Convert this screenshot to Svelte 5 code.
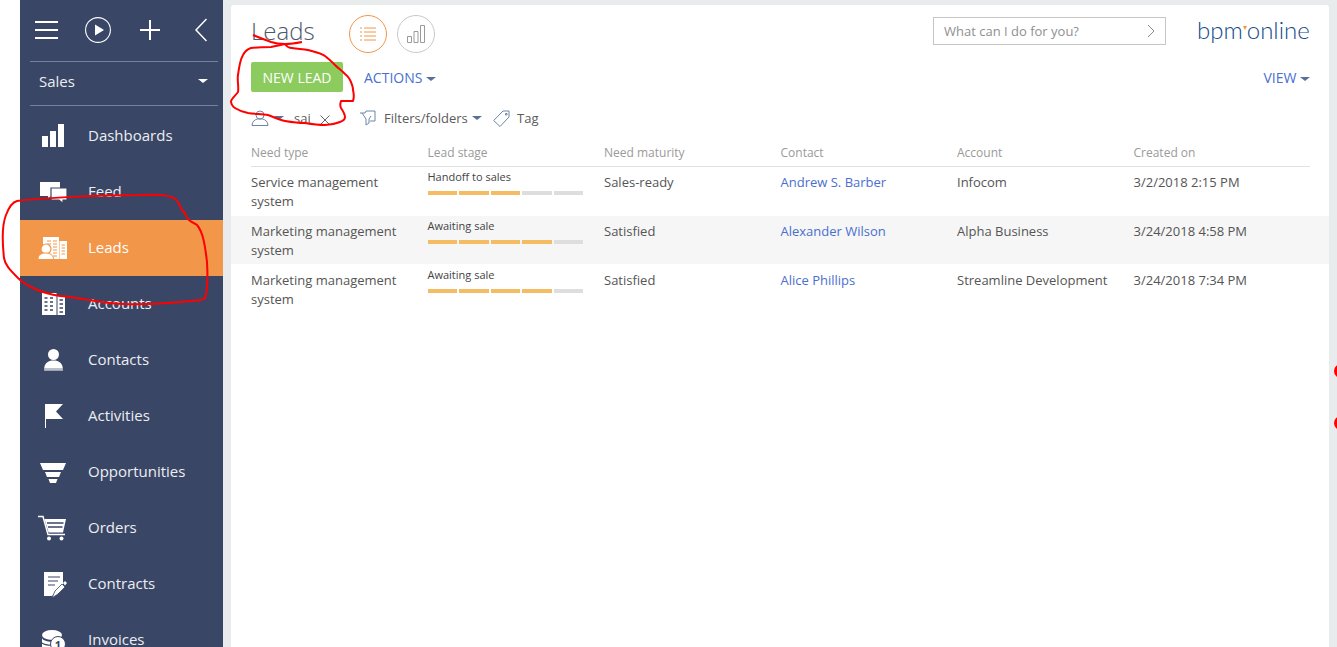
<script>
  const navItems = [
    { label: "Dashboards", icon: "bars" },
    { label: "Feed", icon: "feed" },
    { label: "Leads", icon: "leads", active: true },
    { label: "Accounts", icon: "accounts" },
    { label: "Contacts", icon: "contact" },
    { label: "Activities", icon: "flag" },
    { label: "Opportunities", icon: "funnel" },
    { label: "Orders", icon: "cart" },
    { label: "Contracts", icon: "contract" },
    { label: "Invoices", icon: "invoice" }
  ];

  const columns = ["Need type", "Lead stage", "Need maturity", "Contact", "Account", "Created on"];

  const rows = [
    { need: "Service management system", stage: "Handoff to sales", filled: 3, maturity: "Sales-ready", contact: "Andrew S. Barber", account: "Infocom", created: "3/2/2018 2:15 PM" },
    { need: "Marketing management system", stage: "Awaiting sale", filled: 4, maturity: "Satisfied", contact: "Alexander Wilson", account: "Alpha Business", created: "3/24/2018 4:58 PM" },
    { need: "Marketing management system", stage: "Awaiting sale", filled: 4, maturity: "Satisfied", contact: "Alice Phillips", account: "Streamline Development", created: "3/24/2018 7:34 PM" }
  ];
</script>

<div class="page">
  <aside class="sidebar">
    <div class="toolbar">
      <svg class="tb-menu" width="24" height="20" viewBox="0 0 24 20"><path d="M0 2h23M0 10h23M0 18h23" stroke="#fff" stroke-width="2" fill="none"/></svg>
      <svg class="tb-play" width="26" height="26" viewBox="0 0 26 26"><circle cx="13" cy="13" r="12.4" stroke="#fff" stroke-width="1.100" fill="none"/><path d="M10 7.500l9 5.500-9 5.500z" fill="#fff"/></svg>
      <svg class="tb-plus" width="20" height="20" viewBox="0 0 20 20"><path d="M10 0v20M0 10h20" stroke="#fff" stroke-width="2" fill="none"/></svg>
      <svg class="tb-back" width="12" height="24" viewBox="0 0 12 24"><path d="M11.500 1L1 12l10.500 11" stroke="#fff" stroke-width="1.500" fill="none"/></svg>
    </div>
    <div class="section">
      <span>Sales</span>
      <i class="caret white"></i>
    </div>
    <nav>
      {#each navItems as item}
        <div class="nav-item" class:active={item.active}>
          <span class="nav-icon">
            <svg width="30" height="30" viewBox="0 0 30 30" fill="#fff">
              {#if item.icon === "bars"}
                <path d="M4 15h6v11H4zM12 10h6v16h-6zM20 3h6v23h-6z"/>
              {:else if item.icon === "feed"}
                <path d="M2 5h20v14h-9l-3 3v-3H2z"/>
                <path d="M13 11h16v12h-4v3.500L21 23h-8z" stroke="#3a4665" stroke-width="1.200"/>
              {:else if item.icon === "leads"}
                <path d="M5 4h16v22H5zM21.500 8H29v18h-7.500z"/>
                <path d="M9 8h4M15 8h4M9 11h4M15 11h4M15 14h4M15 17h4M15 20h4M15 23h4M23.500 12h3.500M23.500 15h3.500M23.500 18h3.500M23.500 21h3.500" stroke="#f2964a" stroke-width="1"/>
                <circle cx="8" cy="16" r="5" stroke="#f2964a" stroke-width="1.200"/>
                <path d="M0 26.500c0-4.500 3-6.500 7.500-6.500s8 2 8 6.500z" stroke="#f2964a" stroke-width="1"/>
              {:else if item.icon === "accounts"}
                <path d="M4 4h14.500v22H4zM19.500 7H27v19h-7.500z"/>
                <path d="M6.500 9h3M12 9h3M6.500 13h3M12 13h3M6.500 17h3M12 17h3M6.500 21h3M12 21h3M21.500 11h3.500M21.500 15h3.500M21.500 19h3.500M21.500 23h3.500" stroke="#3a4665" stroke-width="1.300"/>
              {:else if item.icon === "contact"}
                <circle cx="15.500" cy="9.500" r="5.500"/>
                <path d="M6 25.500c0-7.500 4-10 9.500-10s9.500 2.500 9.500 10z"/>
                <path d="M6 24h19" stroke="#3a4665" stroke-width=".7"/>
              {:else if item.icon === "flag"}
                <path d="M7 3h1v24H7z"/>
                <path d="M8 3h17l-7 7.500 7 7.500H8z"/>
              {:else if item.icon === "funnel"}
                <path d="M2 6h26l-3 7H5zM7 15h16l-2 5H9zM10.500 22h9l-1.500 4h-6z"/>
              {:else if item.icon === "cart"}
                <path d="M0 3.500h5l5 18h17" stroke="#fff" stroke-width="1.500" fill="none"/>
                <path d="M6.500 6H28l-3 13.500H10.500z"/>
                <path d="M9 10h16.500M10 14h14.500" stroke="#3a4665" stroke-width="1.300"/>
                <circle cx="11" cy="25.500" r="2"/><circle cx="23.500" cy="25.500" r="2"/>
              {:else if item.icon === "contract"}
                <path d="M6 3h19v13L14 27H6z"/>
                <path d="M10 8h12M10 12h10M10 16h7" stroke="#3a4665" stroke-width="1.200"/>
                <path d="M14 29l3-7 7-7 3 3-7 7z" stroke="#3a4665" stroke-width=".8"/>
                <path d="M25 14l2-2 2 2-2 2.500z"/>
              {:else if item.icon === "invoice"}
                <ellipse cx="14" cy="10" rx="10" ry="5"/>
                <path d="M4 13c2 5 17 5 20 0v17H4z"/>
                <path d="M4 18c4 3 14 3 20 0M4 23c4 3 14 3 20 0" stroke="#3a4665" stroke-width="1.200" fill="none"/>
                <circle cx="20" cy="19" r="7.500" stroke="#3a4665" stroke-width="1"/>
                <text x="20" y="23.500" text-anchor="middle" font-size="11" font-weight="700" fill="#3a4665">1</text>
              {/if}
            </svg>
          </span>
          <span class="nav-label">{item.label}</span>
        </div>
      {/each}
    </nav>
  </aside>

  <main class="card">
    <header class="head">
      <h1>Leads</h1>
      <span class="round on">
        <svg width="16" height="14" viewBox="0 0 16 14"><path d="M0 1h2M4 1h12M0 5h2M4 5h12M0 9h2M4 9h12M0 13h2M4 13h12" stroke="#f2964a" fill="none"/></svg>
      </span>
      <span class="round">
        <svg width="18" height="18" viewBox="0 0 18 18"><path d="M.5 11.500h4v6h-4zM7 6.500h4v11H7zM13.500.5h4v17h-4z" stroke="#9a9a9a" fill="none"/></svg>
      </span>
      <div class="search">
        <span>What can I do for you?</span>
        <svg width="8" height="14" viewBox="0 0 8 14"><path d="M1 1l6 6-6 6" stroke="#8a8a8a" fill="none"/></svg>
      </div>
      <div class="logo">bpm<i></i>online</div>
    </header>

    <div class="actions">
      <button class="new">NEW LEAD</button>
      <span class="link">ACTIONS <i class="caret"></i></span>
      <span class="link view">VIEW <i class="caret"></i></span>
    </div>

    <div class="filters">
      <span class="filter owner">
        <svg width="18" height="16" viewBox="0 0 18 16"><circle cx="9" cy="5" r="4" stroke="#6d86a8" fill="none"/><path d="M1 15.500c0-4 3-6 5.500-6.500h5c2.500.5 5.500 2.500 5.500 6.500z" stroke="#6d86a8" fill="none"/></svg>
        <i class="caret"></i>
        <span class="name">sai</span>
        <svg class="remove" width="10" height="10" viewBox="0 0 10 10"><path d="M.5.5l9 9M9.500.5l-9 9" stroke="#666" fill="none"/></svg>
      </span>
      <span class="filter folders">
        <svg width="17" height="17" viewBox="0 0 17 17"><path d="M1 3h5l1-2h9v10h-5M3 3l4 6v6l3-2V9l2-3" stroke="#6d86a8" fill="none"/></svg>
        Filters/folders <i class="caret"></i>
      </span>
      <span class="filter tag">
        <svg width="17" height="17" viewBox="0 0 17 17"><path d="M10 1h6v6l-9 9.500L.7 10.500zM12.500 3.500h1.500V5h-1.500z" stroke="#6d86a8" fill="none"/></svg>
        Tag
      </span>
    </div>

    <div class="table">
      <div class="row header">
        {#each columns as col}
          <div>{col}</div>
        {/each}
      </div>
      {#each rows as row, i}
        <div class="row" class:alt={i === 1}>
          <div class="need">{row.need}</div>
          <div class="stage">
            <div class="stage-name">{row.stage}</div>
            <div class="bars">
              {#each [0, 1, 2, 3, 4] as n}
                <span class:full={n < row.filled}></span>
              {/each}
            </div>
          </div>
          <div>{row.maturity}</div>
          <div class="contact">{row.contact}</div>
          <div>{row.account}</div>
          <div>{row.created}</div>
        </div>
      {/each}
    </div>
  </main>

  <!-- hand-drawn annotations on top of the screenshot -->
  <svg class="marks" width="1337" height="647" viewBox="0 0 1337 647" fill="none" stroke="#f00" stroke-width="2" stroke-linejoin="round">
    <path d="M17 201C40 198 100 195 140 195C165 194 175 196 178 202C181 207 181 211 185 213C186 219 190 221 197 225C203 232 205 245 207 262C208 280 208 290 205 298C202 301 198 300 190 301C170 303 150 305 125 304C105 304 85 298 60 296C40 293 25 285 18 278C10 270 5 265 4 258C2 240 2 225 6 215C9 207 13 202 17 201Z"/>
    <path d="M253 35C260 38 266 40 271 42C277 44 281 44 285 44C291 44 297 43 302 42"/>
    <path d="M285 44C287 47 289 48 292 48C298 49 303 49 308 50C315 52 321 53 325 56C329 59 332 62 335 65C338 68 341 70 343 72C346 75 349 77 350 80C352 84 353 87 353 90C354 94 354 98 353 101L341 101C340 104 340 106 341 108C343 111 345 114 345 117C345 120 343 121 340 122C335 124 330 125 325 125C318 125 311 124 305 123C298 123 291 122 285 121C279 120 274 117 268 115C262 114 255 114 248 113C243 112 238 110 235 108C232 106 231 104 231 101C232 98 236 95 238 92C239 86 237 81 238 75C239 67 240 60 243 55C245 51 248 49 251 48C258 47 265 47 271 47C276 46 281 45 285 44Z"/>
    <circle cx="1341" cy="371" r="7" fill="#f00" stroke="none"/>
    <circle cx="1341" cy="423" r="7" fill="#f00" stroke="none"/>
  </svg>
</div>

<style>
  :global(body) {
    margin: 0;
    background: #fff;
    font-family: "Open Sans", sans-serif;
    overflow: hidden;
  }

  .page {
    position: relative;
    display: flex;
    height: 647px;
    width: 1337px;
    overflow: hidden;
    padding-left: 20px;
    box-sizing: border-box;
    background: #e8ecec;
    background-image: linear-gradient(to right, #fff 20px, transparent 20px);
  }

  .sidebar {
    width: 203px;
    flex: none;
    background: #3a4665;
    color: #eceef2;
    font-size: 15px;
    overflow: hidden;
  }

  .toolbar {
    display: flex;
    align-items: center;
    height: 61px;
    padding: 0 0 2px 15px;
    box-sizing: border-box;
  }

  .tb-play {
    margin-left: 26px;
  }

  .tb-plus {
    margin-left: 29px;
  }

  .tb-back {
    margin-left: 35px;
  }

  .section {
    display: flex;
    align-items: center;
    justify-content: space-between;
    margin: 0 5px 0 10px;
    padding: 0 10px 5px 9px;
    height: 38px;
    border-top: 1px solid #75809a;
    border-bottom: 1px solid #75809a;
    font-size: 15px;
  }

  nav {
    margin-top: 2px;
  }

  .nav-item {
    display: flex;
    align-items: center;
    height: 56px;
    padding-left: 18px;
    white-space: nowrap;
  }

  .nav-label {
    padding-bottom: 2px;
  }

  .nav-item.active {
    background: #f2964a;
    color: #fff;
  }

  .nav-icon {
    display: flex;
    width: 50px;
    flex: none;
  }

  .caret {
    display: inline-block;
    width: 0;
    height: 0;
    border-left: 5px solid transparent;
    border-right: 5px solid transparent;
    border-top: 4px solid #5a7098;
    vertical-align: 2px;
  }

  .caret.white {
    border-top-color: #fff;
  }

  .card {
    flex: 1;
    margin: 5px 8px 0 8px;
    background: #fff;
    border-radius: 3px 3px 0 0;
    color: #555;
    padding: 0 19px 0 20px;
    min-width: 0;
  }

  .head {
    display: flex;
    align-items: center;
    height: 47px;
    padding-top: 5px;
  }

  h1 {
    margin: 0 0 5px;
    font-size: 24px;
    font-weight: 300;
    color: #4f566b;
    width: 98px;
    line-height: 34px;
  }

  .round {
    display: flex;
    align-items: center;
    justify-content: center;
    box-sizing: border-box;
    width: 38px;
    height: 38px;
    border: 1px solid #c9c9c9;
    border-radius: 50%;
    margin-right: 10px;
  }

  .round.on {
    border-color: #f2964a;
  }

  .search {
    display: flex;
    align-items: center;
    justify-content: space-between;
    box-sizing: border-box;
    width: 233px;
    height: 28px;
    margin-left: auto;
    margin-bottom: 6px;
    padding: 0 10px;
    border: 1px solid #c6c6c6;
    font-size: 13px;
    color: #8f8f8f;
  }

  .logo {
    width: 113px;
    margin-left: 31px;
    margin-bottom: 8px;
    font-family: "Lato", sans-serif;
    font-weight: 300;
    font-size: 24px;
    color: #134a8c;
    line-height: 28px;
    white-space: nowrap;
  }

  .logo i {
    display: inline-block;
    width: 0;
    height: 0;
    border-left: 2.500px solid transparent;
    border-right: 2.500px solid transparent;
    border-top: 4px solid #f2964a;
    vertical-align: 9px;
  }

  .actions {
    display: flex;
    align-items: center;
    height: 30px;
    margin-top: 5px;
  }

  .new {
    width: 92px;
    height: 30px;
    border: none;
    border-radius: 2px;
    background: #8ccb5e;
    color: #fff;
    font: 14px "Open Sans", sans-serif;
    padding: 0;
    margin-right: 21px;
  }

  .link {
    font-size: 14px;
    color: #4a6fcf;
  }

  .view {
    margin-left: auto;
  }

  .filters {
    display: flex;
    align-items: center;
    height: 20px;
    margin-top: 16px;
    font-size: 13px;
    color: #5b5b5b;
  }

  .filter {
    display: flex;
    align-items: center;
    gap: 6px;
  }

  .owner {
    width: 108px;
    gap: 5px;
  }

  .name {
    margin-left: 5px;
    margin-right: 4px;
  }

  .remove {
    margin-top: 4px;
  }

  .folders {
    width: 134px;
    gap: 8px;
  }

  .folders .caret {
    margin-left: -4px;
  }

  .tag {
    gap: 7px;
  }

  .table {
    margin: 12px 0 0 -20px;
    font-size: 13px;
  }

  .row {
    display: grid;
    grid-template-columns: repeat(6, 176.500px);
    padding-left: 20px;
    height: 49px;
    box-sizing: border-box;
    color: #555;
    line-height: 19px;
    padding-top: 6px;
  }

  .row > div {
    padding-right: 16px;
  }

  .row.header {
    height: 27px;
    padding-top: 0;
    color: #9a9a9a;
    font-size: 12px;
    line-height: 26px;
    position: relative;
  }

  .row.header::after {
    content: "";
    position: absolute;
    left: 20px;
    right: 0;
    bottom: 0;
    height: 1px;
    background: #e2e2e2;
  }

  .row.alt {
    height: 48px;
    margin-bottom: 1px;
    background: #f6f6f6;
    margin-right: -19px;
  }

  .contact {
    color: #4a6fcf;
  }

  .row > .stage {
    padding-right: 21px;
  }

  .stage-name {
    font-size: 11px;
    line-height: 14px;
    color: #444;
    margin-top: -3px;
  }

  .bars {
    display: flex;
    gap: 2px;
    margin-top: 7px;
  }

  .bars span {
    flex: 1;
    height: 4px;
    background: #dedede;
  }

  .bars span.full {
    background: #f5bd63;
  }

  .marks {
    position: absolute;
    left: 0;
    top: 0;
    pointer-events: none;
  }
</style>
